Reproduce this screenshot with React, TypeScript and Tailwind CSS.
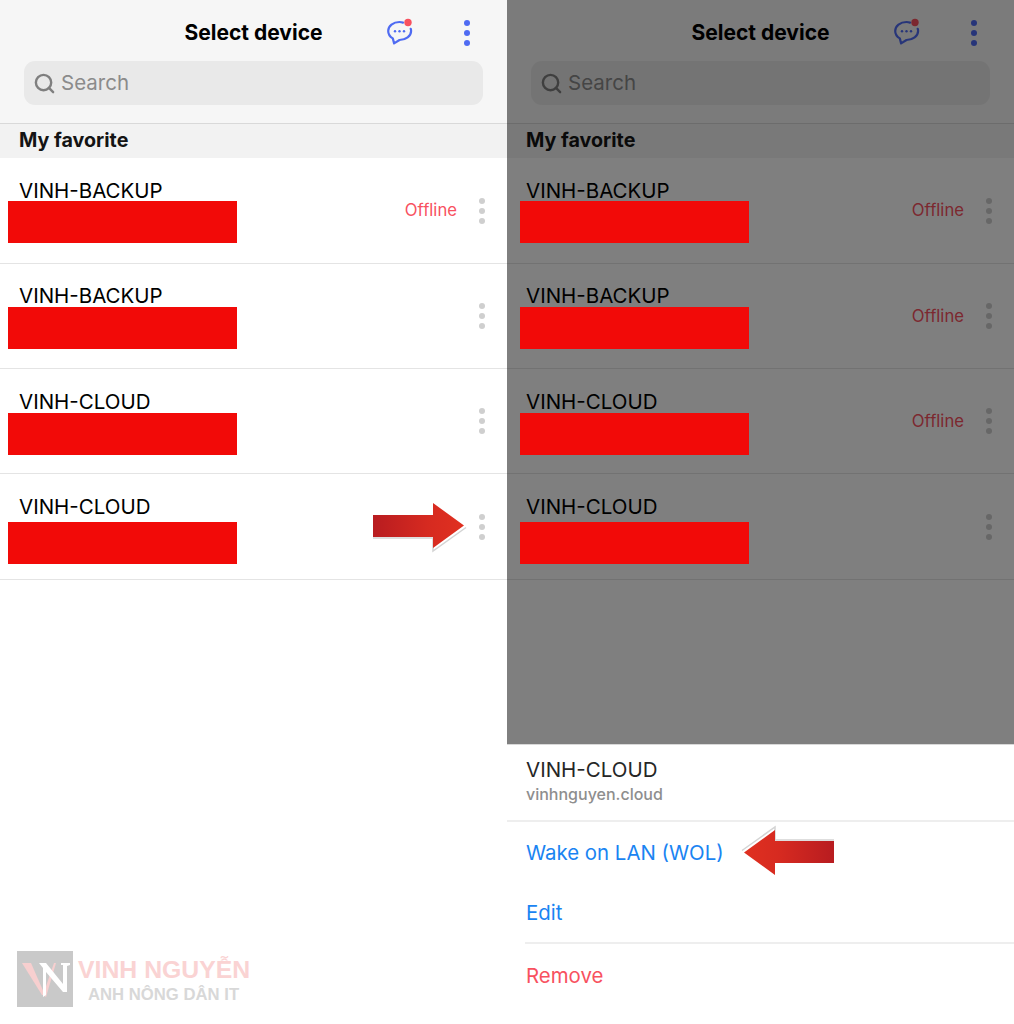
import { Search } from "lucide-react";

const font = "font-['Inter','Liberation_Sans',sans-serif]";

type Device = {
  name: string;
  offline: boolean;
  rowClass: string;
  nameTop: string;
  barTop: string;
};

const devices: Device[] = [
  { name: "VINH-BACKUP", offline: true, rowClass: "h-[106px]", nameTop: "top-[19px]", barTop: "top-[43px]" },
  { name: "VINH-BACKUP", offline: false, rowClass: "h-[105px]", nameTop: "top-[18px]", barTop: "top-[43px]" },
  { name: "VINH-CLOUD", offline: false, rowClass: "h-[105px]", nameTop: "top-[19px]", barTop: "top-[44px]" },
  { name: "VINH-CLOUD", offline: false, rowClass: "h-[105px]", nameTop: "top-[19px]", barTop: "top-[48px]" },
];

function ChatIcon() {
  return (
    <svg width="28" height="30" viewBox="0 0 28 30" fill="none">
      <path
        d="M17 4.6C15.9 4.2 14.7 4 13.5 4 7.2 4 2.2 8 2.2 13c0 3.1 1.8 5.7 4.6 7.4l1.3 5 5.4-3.4c6.3 0 11.6-3.900 11.6-9 0-.8-.1-1.500-.4-2.200"
        stroke="#4f6bf2"
        strokeWidth="2.200"
        strokeLinecap="round"
        strokeLinejoin="round"
      />
      <circle cx="9" cy="13.200" r="1.200" fill="#4f6bf2" />
      <circle cx="13.500" cy="13.200" r="1.200" fill="#4f6bf2" />
      <circle cx="18" cy="13.200" r="1.200" fill="#4f6bf2" />
      <circle cx="22" cy="4.500" r="3.700" fill="#f8515f" />
    </svg>
  );
}

function Dots({ className }: { className: string }) {
  return (
    <div className="flex flex-col gap-[4px]">
      <span className={`h-[6px] w-[6px] rounded-full ${className}`} />
      <span className={`h-[6px] w-[6px] rounded-full ${className}`} />
      <span className={`h-[6px] w-[6px] rounded-full ${className}`} />
    </div>
  );
}

// the left-pointing one is the same arrow turned round, so its shadow ends up on top
function RedArrow({ id, turned, tail }: { id: string; turned?: boolean; tail: number }) {
  return (
    <svg width="98" height="52" viewBox="0 0 98 52" className={turned ? "rotate-180" : ""}>
      <defs>
        <linearGradient id={id} x1="0" y1="0" x2="1" y2="0">
          <stop offset="0" stopColor="#b81c20" />
          <stop offset="0.6" stopColor="#d62a20" />
          <stop offset="1" stopColor="#e03020" />
        </linearGradient>
      </defs>
      <path d={`M${tail} 37H62V50L95 26.500`} fill="none" stroke="#d4d4d4" strokeWidth="1.500" />
      <path d={`M${tail} 14H62V2L93 24.500 62 47V36H${tail}Z`} fill={`url(#${id})`} />
    </svg>
  );
}

function Row({ device, offline, barLeft }: { device: Device; offline: boolean; barLeft: string }) {
  return (
    <div className={`relative pl-[19px] ${device.rowClass}`}>
      <div className="flex h-full items-center justify-end pr-[22px]">
        {offline && <span className="mr-[22px] pt-px text-[16.700px] text-[#f8515f]">Offline</span>}
        <Dots className="bg-[#cfcfcf]" />
      </div>
      <span className={`absolute left-[19px] text-[20.500px] leading-[28px] text-black ${device.nameTop}`}>
        {device.name}
      </span>
      <div className={`absolute z-20 h-[42px] w-[229px] bg-[#f20a08] ${barLeft} ${device.barTop}`} />
    </div>
  );
}

function Panel({ dimmed }: { dimmed: boolean }) {
  return (
    <div className={`relative h-[1024px] w-[507px] overflow-hidden bg-white ${font}`}>
      <div className="h-[124px] border-b border-[#d9d9d9] bg-[#f6f6f6] px-[24px]">
        <div className="grid h-[61px] grid-cols-[1fr_auto_1fr] items-center pt-[4px]">
          <span />
          <span className="text-[21px] font-bold leading-[28px] text-black">Select device</span>
          <div className="flex items-center justify-end gap-[50px] pr-[13px]">
            <ChatIcon />
            <Dots className="bg-[#4f6bf2]" />
          </div>
        </div>
        <div className="flex h-[44px] items-center gap-[5px] rounded-[11px] bg-[#e9e9e9] pl-[9px]">
          <Search size={23} strokeWidth={2.500} className="text-[#7f7f7f]" />
          <span className="text-[20.500px] text-[#8b8b8b]">Search</span>
        </div>
      </div>

      <div className="flex h-[34px] items-center bg-[#f2f2f2] pl-[19px] text-[19.700px] font-bold text-[#141414]">
        My favorite
      </div>

      <div className="divide-y divide-[#e4e4e4] border-b border-[#e4e4e4]">
        {devices.map((device, i) => (
          <Row
            key={i}
            device={device}
            offline={dimmed ? i < 3 : device.offline}
            barLeft={dimmed ? "left-[13px]" : "left-[8px]"}
          />
        ))}
      </div>

      {!dimmed && (
        <>
          <div className="absolute left-[371px] top-[501px]">
            <RedArrow id="arrowRight" tail={2} />
          </div>
          <div className="absolute left-[17px] top-[951px] flex items-start">
            <svg width="56" height="56" viewBox="0 0 56 56">
              <rect width="56" height="56" fill="#c9c9c9" />
              <path d="M5 12H14L28 44H25Z" fill="#f7cfcf" />
              <path d="M26 44L37 12H39L29 46Z" fill="#f7cfcf" />
              <path d="M22 12H29L46 33V14H44V12H53V14L50 15V41H46L29 21V44L26 46V17Z" fill="#fff" />
            </svg>
            <div className="ml-[5px] flex flex-col pt-[2px] font-['Liberation_Sans',sans-serif] font-bold">
              <span className="text-[24.800px] leading-[34px] text-[#fad3d3]">VINH NGUYỄN</span>
              <span className="ml-[10px] mt-[-6px] text-[16.700px] leading-[28px] text-[#d8d8d8]">
                ANH NÔNG DÂN IT
              </span>
            </div>
          </div>
        </>
      )}

      {dimmed && (
        <>
          <div className="absolute inset-x-0 top-0 z-10 h-[744px] bg-black/50" />
          <div className="absolute inset-x-0 bottom-0 z-20 h-[280px] border-t border-[#d8d8d8] bg-white">
            <div className="h-[77px] border-b-2 border-[#eeeeee] pl-[19px] pt-[11px]">
              <div className="text-[20.500px] leading-[28px] text-[#262626]">VINH-CLOUD</div>
              <div className="mt-[-1px] text-[16px] font-medium leading-[22px] text-[#8e8e8e]">vinhnguyen.cloud</div>
            </div>
            <div className="flex h-[61px] items-center pl-[19px] pt-[2px] text-[20.400px] text-[#1a84f2]">Wake on LAN (WOL)</div>
            <div className="ml-[18px] flex h-[61px] items-center border-b-2 border-[#eeeeee] pl-px pt-[2px] text-[20.400px] text-[#1a84f2]">
              Edit
            </div>
            <div className="flex h-[62px] items-center pl-[19px] pt-[2px] text-[20.400px] text-[#f8515f]">Remove</div>
            <div className="absolute left-[232px] top-[80px]">
              <RedArrow id="arrowLeft" turned tail={3} />
            </div>
          </div>
        </>
      )}
    </div>
  );
}

export default function App() {
  return (
    <div className="flex h-[1024px] w-[1014px] overflow-hidden">
      <Panel dimmed={false} />
      <Panel dimmed />
    </div>
  );
}
